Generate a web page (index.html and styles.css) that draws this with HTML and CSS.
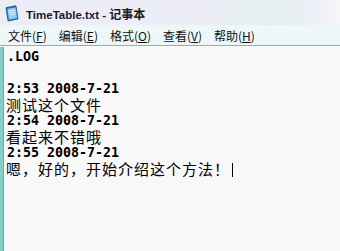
FILE: index.html
```html
<!DOCTYPE html>
<html lang="zh-CN">
<head>
  <meta charset="UTF-8">
  <title>TimeTable.txt - 记事本</title>
  <link rel="stylesheet" href="styles.css">
</head>
<body>
  <div class="window">
    <div class="titlebar">
      <svg class="app-icon" width="16" height="17" viewBox="0 0 16 17">
        <path d="M2 3 L12 1 L14 14 L4 16 Z" fill="#3a7fd0" stroke="#1d4f92" stroke-width="0.8"/>
        <path d="M3.5 4 L11.5 2.5 L13 13 L5 14.5 Z" fill="#8fd0f2"/>
        <path d="M4.5 6 L11 5 M4.8 8 L11.3 7 M5.1 10 L11.6 9" stroke="#e8f6ff" stroke-width="0.8"/>
        <path d="M2.5 2.6 L11.8 0.8" stroke="#333" stroke-width="1.2" stroke-dasharray="1 1"/>
      </svg>
      <span class="title">TimeTable.txt - <span class="title-cjk">记事本</span></span>
    </div>

    <div class="menubar">
      <span class="menu-item">文件(<u>F</u>)</span>
      <span class="menu-item">编辑(<u>E</u>)</span>
      <span class="menu-item">格式(<u>O</u>)</span>
      <span class="menu-item">查看(<u>V</u>)</span>
      <span class="menu-item">帮助(<u>H</u>)</span>
    </div>

    <div class="editor">
      <div class="frame"></div>
      <div class="text">
        <div class="line mono">.LOG</div>
        <div class="line"></div>
        <div class="line mono">2:53 2008-7-21</div>
        <div class="line cjk">测试这个文件</div>
        <div class="line mono">2:54 2008-7-21</div>
        <div class="line cjk">看起来不错哦</div>
        <div class="line mono">2:55 2008-7-21</div>
        <div class="line cjk">嗯，好的，开始介绍这个方法！<span class="caret"></span></div>
      </div>
    </div>
  </div>
</body>
</html>
```

FILE: styles.css
```css
body {
  margin: 0;
  width: 340px;
  height: 251px;
  overflow: hidden;
  background-color: #f8f8f8;
}
.window {
  display: flex;
  flex-direction: column;
  height: 251px;
}
.titlebar {
  height: 25px;
  display: flex;
  align-items: center;
  gap: 6px;
  padding-left: 4px;
  background: linear-gradient(90deg, #eceef6 0%, #ecedf6 60%, #e2f0ef 80%, #eceef8 92%, #f6f6f8 100%);
}
.app-icon {
  margin-top: 1px;
}
.title {
  font-family: "Liberation Sans", "Noto Sans CJK SC", sans-serif;
  font-weight: bold;
  font-size: 11.5px;
  color: #1a1a2a;
  padding-top: 2px;
  white-space: pre;
}
.title-cjk {
  font-family: "Noto Sans CJK SC", sans-serif;
  font-size: 12px;
}
.menubar {
  height: 20px;
  display: flex;
  align-items: center;
  padding-left: 8px;
  background-color: #eef7f7;
  border-bottom: 1px solid #a2a6b4;
  font-family: "Noto Sans CJK SC", sans-serif;
  font-size: 12px;
  color: #111;
}
.menu-item {
  margin-right: 12px;
}
.menu-item u {
  text-underline-offset: 1px;
}
.editor {
  flex: 1;
  display: flex;
  border-top: 1px solid #fafafa;
}
.frame {
  width: 3px;
  background-color: #86cfc4;
  border-right: 1px solid #8a96b4;
}
.text {
  padding-top: 2px;
  padding-left: 2px;
}
.line {
  height: 16px;
  line-height: 16px;
  white-space: pre;
  color: #000;
}
.mono {
  font-family: "DejaVu Sans Mono", monospace;
  font-weight: bold;
  font-size: 13.3px;
  padding-left: 1px;
}
.cjk {
  font-family: "Noto Sans CJK SC", sans-serif;
  font-size: 15px;
  letter-spacing: 1px;
}
.caret {
  display: inline-block;
  width: 1px;
  height: 14px;
  margin-left: 2px;
  vertical-align: -2px;
  background-color: #000;
}
```
